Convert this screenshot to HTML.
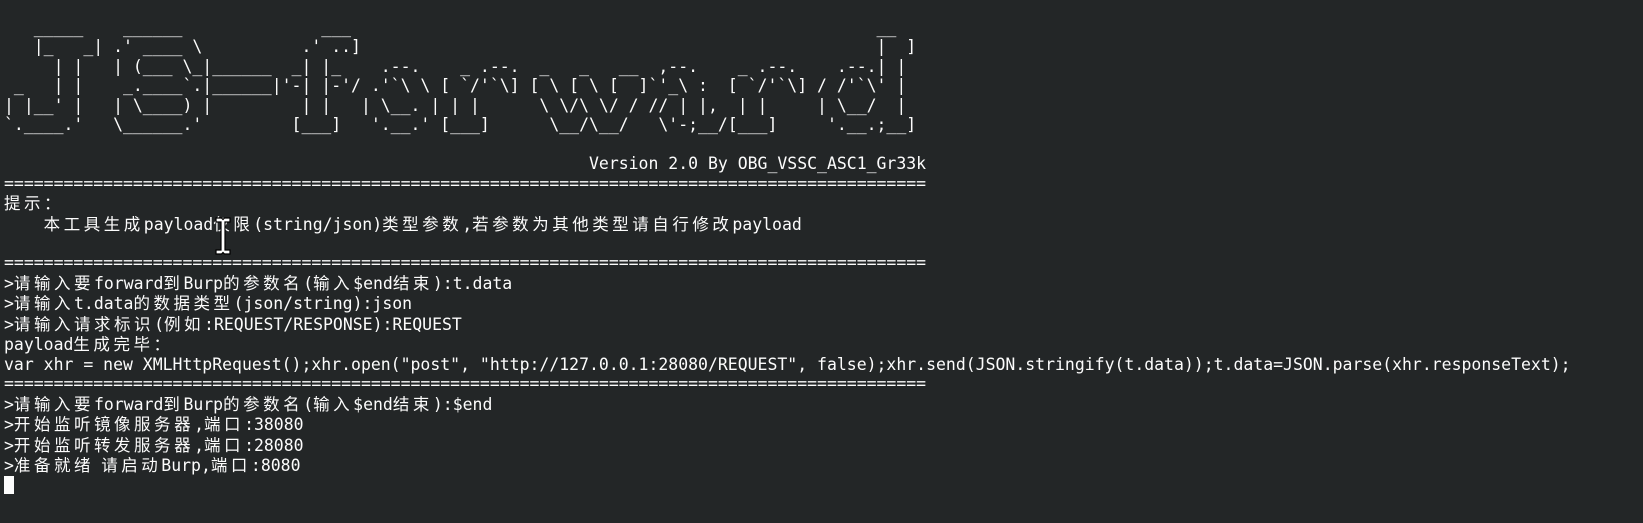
<!DOCTYPE html>
<html><head><meta charset="utf-8">
<style>
html,body{margin:0;padding:0;background:#232627;width:1643px;height:523px;overflow:hidden}
pre{margin:0;position:absolute;left:4px;top:18px;font-family:"DejaVu Sans Mono","Liberation Mono","Noto Sans CJK SC",monospace;font-size:16.48px;line-height:19.45px;color:#fcfcfc;white-space:pre}
.c{font-family:"Noto Sans CJK SC","WenQuanYi Zen Hei",sans-serif;letter-spacing:3.55px}
.cur{display:inline-block;width:9.5px;height:18px;background:#fcfcfc;vertical-align:top;margin-top:1px}
</style></head><body>
<pre>   _____    ______              ___                                                     __
   |_   _| .' ____ \          .' ..]                                                    |  ]
     | |   | (___ \_|______  _| |_    .--.    _ .--.  _   _   __  ,--.    _ .--.    .--.| |
 _   | |    _.____`.|______|'-| |-'/ .'`\ \ [ `/'`\] [ \ [ \ [  ]`'_\ :  [ `/'`\] / /'`\' |
| |__' |   | \____) |         | |   | \__. | | |      \ \/\ \/ / // | |,  | |     | \__/  |
`.____.'   \______.'         [___]   '.__.' [___]      \__/\__/   \'-;__/[___]     '.__.;__]

                                                           Version 2.0 By OBG_VSSC_ASC1_Gr33k
=============================================================================================
<span class="c">提示：</span>
    <span class="c">本工具生成</span>payload<span class="c">仅限</span>(string/json)<span class="c">类型参数</span>,<span class="c">若参数为其他类型请自行修改</span>payload

=============================================================================================
&gt;<span class="c">请输入要</span>forward<span class="c">到</span>Burp<span class="c">的参数名</span>(<span class="c">输入</span>$end<span class="c">结束</span>):t.data
&gt;<span class="c">请输入</span>t.data<span class="c">的数据类型</span>(json/string):json
&gt;<span class="c">请输入请求标识</span>(<span class="c">例如</span>:REQUEST/RESPONSE):REQUEST
payload<span class="c">生成完毕：</span>
var xhr = new XMLHttpRequest();xhr.open("post", "http://127.0.0.1:28080/REQUEST", false);xhr.send(JSON.stringify(t.data));t.data=JSON.parse(xhr.responseText);
=============================================================================================
&gt;<span class="c">请输入要</span>forward<span class="c">到</span>Burp<span class="c">的参数名</span>(<span class="c">输入</span>$end<span class="c">结束</span>):$end
&gt;<span class="c">开始监听镜像服务器</span>,<span class="c">端口</span>:38080
&gt;<span class="c">开始监听转发服务器</span>,<span class="c">端口</span>:28080
&gt;<span class="c">准备就绪 请启动</span>Burp,<span class="c">端口</span>:8080
<span class="cur"></span></pre>
<svg style="position:absolute;left:215px;top:217px" width="16" height="38" viewBox="0 0 16 38">
<path d="M1 1 H6.5 L8 2.5 L9.5 1 H15 V5 H10 V33 H15 V37 H9.5 L8 35.5 L6.5 37 H1 V33 H6 V5 H1 Z" fill="#ffffff" stroke="#000000" stroke-width="1.2"/>
</svg>
</body></html>
